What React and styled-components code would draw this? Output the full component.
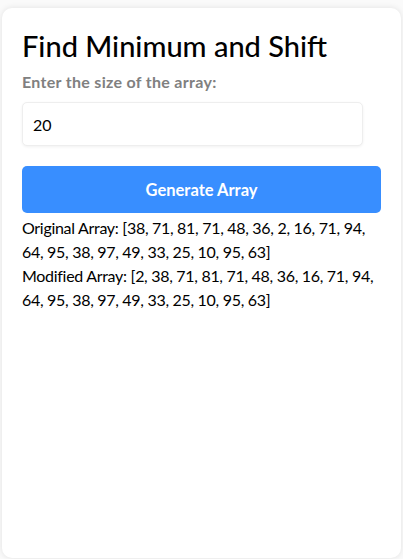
import React, { useState } from 'react';
import styled, { createGlobalStyle } from 'styled-components';

const GlobalStyle = createGlobalStyle`
    body {
        margin: 0;
        background: #fafafa;
        font-family: Lato, "Noto Sans", sans-serif;
    }
`;

const Page = styled.div`
    padding: 8px 2px 1px;
    box-sizing: border-box;
    min-height: 100vh;
    display: flex;
`;

const Card = styled.div`
    flex: 1;
    background: #fff;
    border-radius: 10px;
    box-shadow: 0 0 6px rgba(0, 0, 0, 0.1);
    padding: 20px;
`;

const Title = styled.h1`
    margin: 0 0 8px;
    font-size: 29px;
    line-height: 36px;
    font-weight: 500;
    color: #000;
`;

const Label = styled.label`
    display: block;
    font-size: 16px;
    line-height: 20px;
    letter-spacing: 0.3px;
    font-weight: bold;
    color: #808080;
    margin-bottom: 10px;
`;

const Input = styled.input`
    display: block;
    width: 95%;
    box-sizing: border-box;
    height: 44px;
    padding: 0 10px;
    font-family: inherit;
    font-size: 16px;
    border: 1px solid #eee;
    border-radius: 5px;
    box-shadow: 0 1px 3px rgba(0, 0, 0, 0.06);
    outline: none;
`;

const Button = styled.button`
    display: block;
    width: 100%;
    height: 47px;
    margin-top: 20px;
    margin-bottom: 3px;
    background: #388eff;
    color: #fff;
    border: none;
    border-radius: 5px;
    font-family: inherit;
    font-size: 16.5px;
    font-weight: bold;
    cursor: pointer;
`;

const Output = styled.p`
    margin: 0;
    font-size: 16px;
    line-height: 24px;
    letter-spacing: -0.3px;
    color: #000;
`;

const original = [38, 71, 81, 71, 48, 36, 2, 16, 71, 94, 64, 95, 38, 97, 49, 33, 25, 10, 95, 63];

const shiftMin = (arr) => {
    const idx = arr.indexOf(Math.min(...arr));
    return [arr[idx], ...arr.slice(0, idx), ...arr.slice(idx + 1)];
};

export default function App() {
    const [size, setSize] = useState('20');
    const [arr, setArr] = useState(original);

    const generate = () => {
        const n = parseInt(size, 10) || 0;
        setArr(Array.from({ length: n }, () => Math.floor(Math.random() * 100) + 1));
    };

    return (
        <>
            <GlobalStyle />
            <Page>
                <Card>
                    <Title>Find Minimum and Shift</Title>
                    <Label htmlFor="size">Enter the size of the array:</Label>
                    <Input id="size" type="number" value={size} onChange={(e) => setSize(e.target.value)} />
                    <Button onClick={generate}>Generate Array</Button>
                    <Output>Original Array: [{arr.join(', ')}]</Output>
                    <Output>Modified Array: [{shiftMin(arr).join(', ')}]</Output>
                </Card>
            </Page>
        </>
    );
}
